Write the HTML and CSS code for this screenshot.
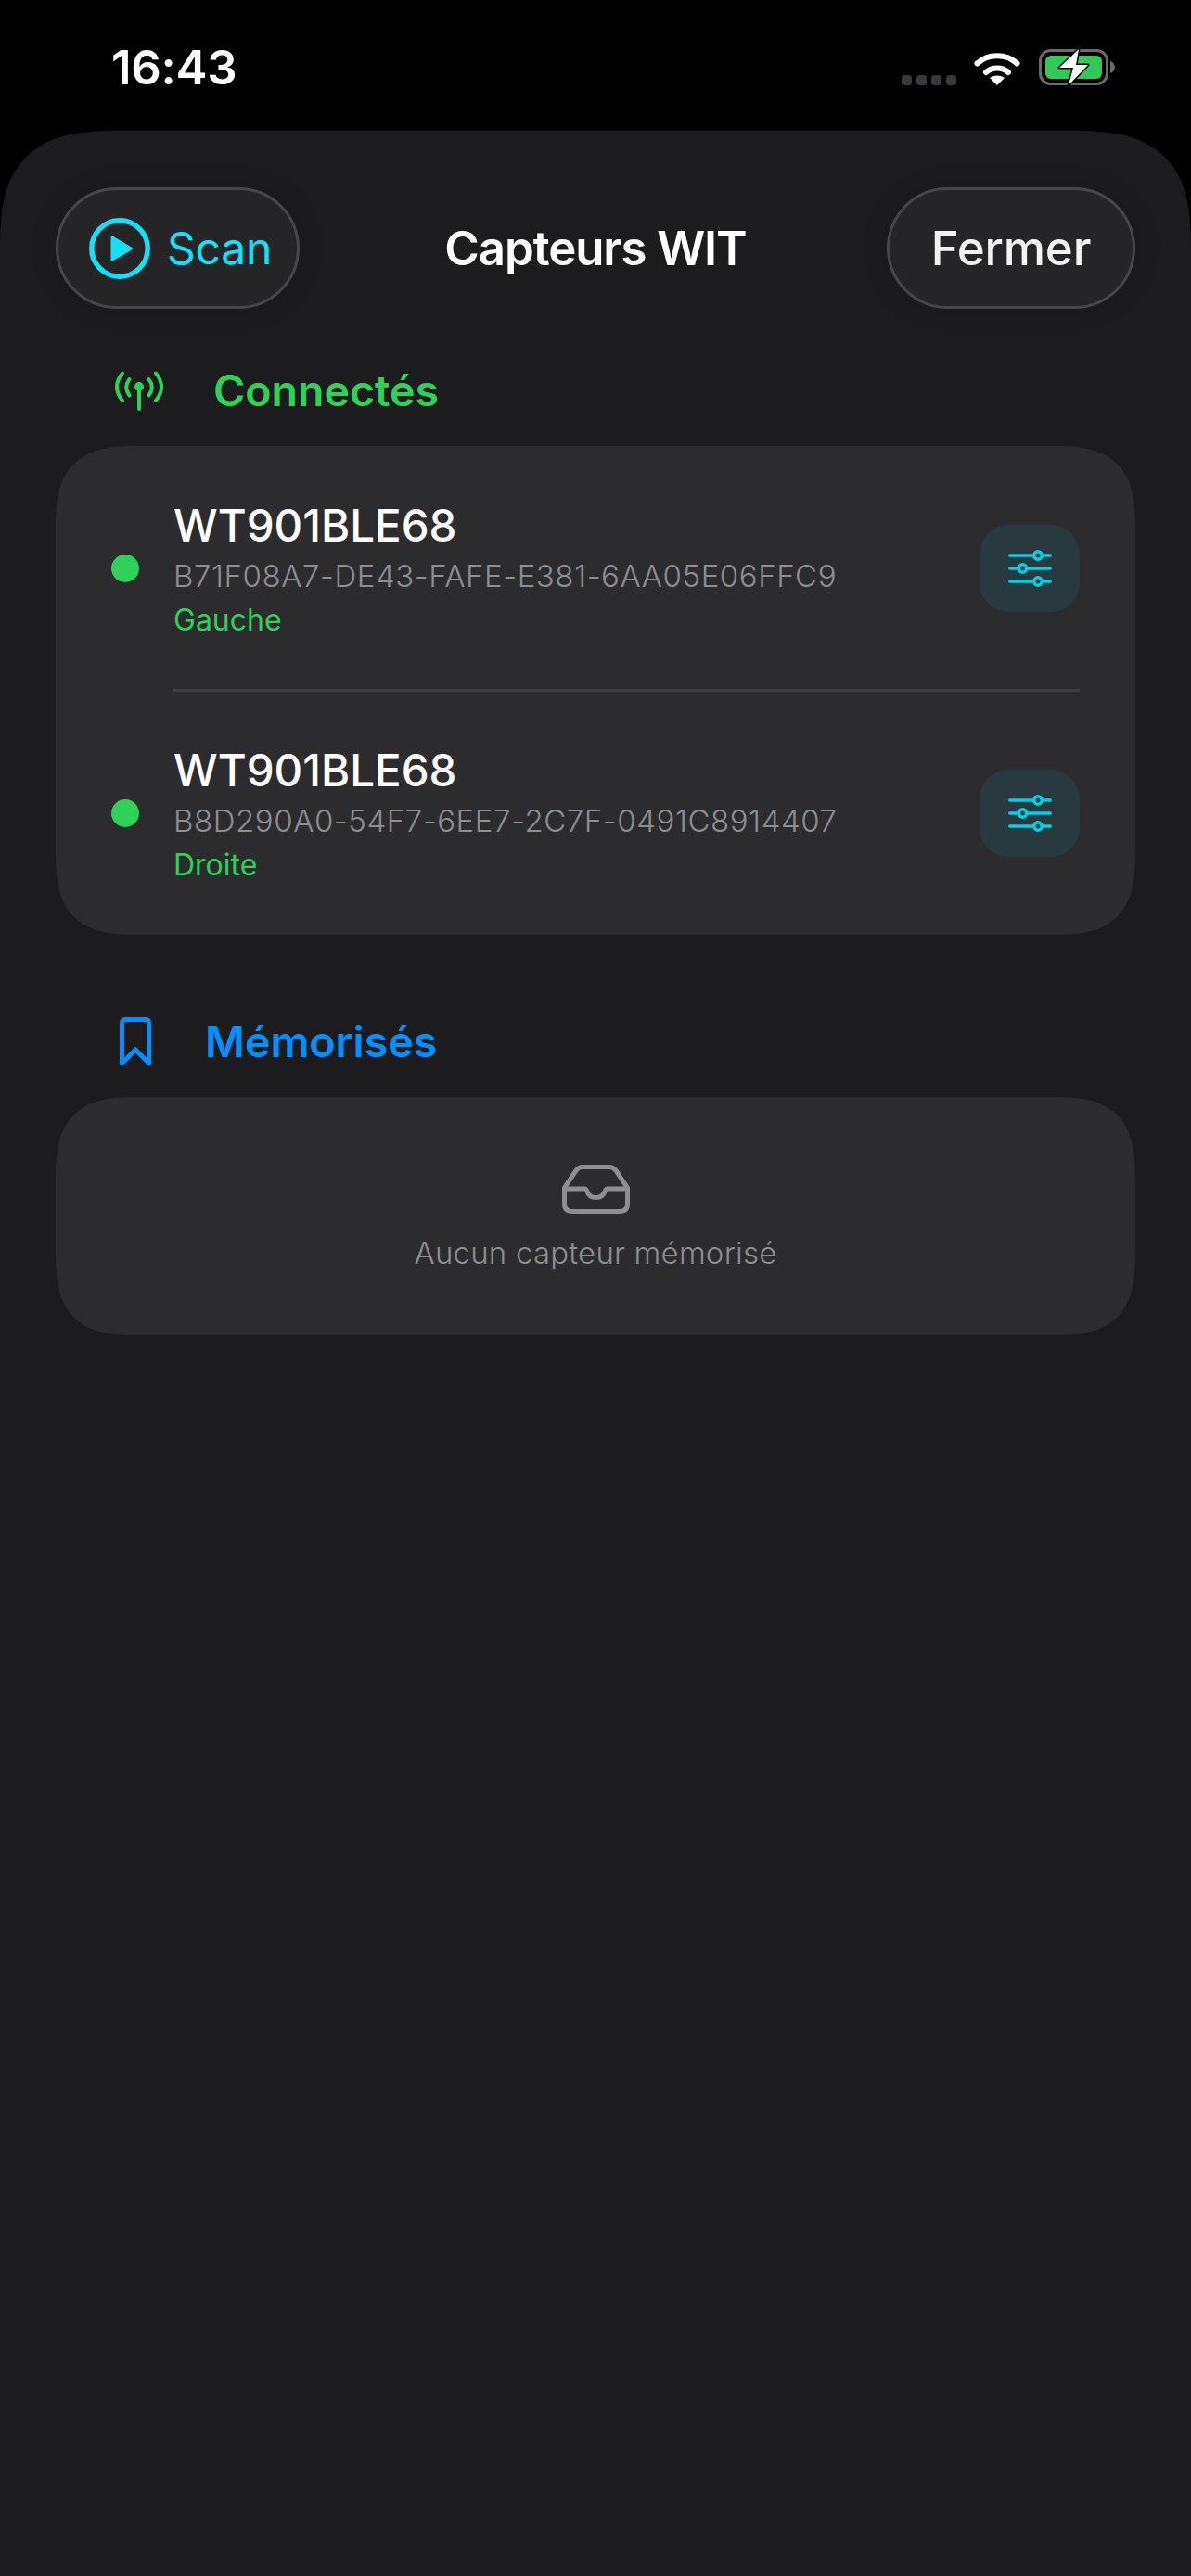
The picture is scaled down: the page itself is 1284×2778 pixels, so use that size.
FILE: index.html
```html
<!DOCTYPE html>
<html lang="fr">
  <head>
    <meta charset="UTF-8" />
    <meta name="viewport" content="width=device-width, initial-scale=1.0" />
    <title>Capteurs WIT</title>
    <link rel="stylesheet" href="styles.css">
  </head>
  <body>
    <div class="status-bar">
      <span class="status-time">16:43</span>
      <div class="status-icons">
        <div class="signal-dots"><i></i><i></i><i></i><i></i></div>
        <svg class="wifi" viewBox="0 0 50 38" width="50" height="38">
          <path d="M3.5 14.5C15 3.5 35 3.5 46.5 14.5" fill="none" stroke="#fff" stroke-width="6" stroke-linecap="round" />
          <path d="M13 24C19.5 18 30.5 18 37 24" fill="none" stroke="#fff" stroke-width="6" stroke-linecap="round" />
          <path d="M25 38L17 30C21.5 26.500 28.500 26.500 33 30Z" fill="#fff" />
        </svg>
        <svg class="battery" viewBox="0 0 82 41" width="82" height="41">
          <rect x="1.500" y="1.500" width="72" height="36" rx="11" fill="none" stroke="#6a6a6c" stroke-width="3" />
          <rect x="7" y="7" width="61" height="25" rx="6" fill="#34c759" />
          <path d="M77 13C80 14 82 16.500 82 19.500C82 22.500 80 25 77 26Z" fill="#6a6a6c" />
          <path d="M43 0L22 20H37L32 39L53 17H40Z" fill="#fff" stroke="#000" stroke-width="3" stroke-linejoin="round" paint-order="stroke" />
        </svg>
      </div>
    </div>

    <main class="sheet">
      <header class="sheet-header">
        <button class="pill pill-scan" type="button">
          <svg viewBox="0 0 66 66" width="66" height="66">
            <circle cx="33" cy="33" r="30.200" fill="none" stroke="#14e0f7" stroke-width="5.500" />
            <path d="M25 21L45.500 33L25 45Z" fill="#14e0f7" stroke="#14e0f7" stroke-width="3" stroke-linejoin="round" />
          </svg>
          <span>Scan</span>
        </button>
        <h1 class="sheet-title">Capteurs WIT</h1>
        <button class="pill pill-close" type="button">Fermer</button>
      </header>

      <h2 class="section-head section-connected">
        <svg viewBox="0 0 52 43" width="52" height="43">
          <g fill="none" stroke="#30d158" stroke-width="4" stroke-linecap="round">
            <path d="M8 2.500Q-4 17 8 32" />
            <path d="M15.500 9Q9 17.500 15.500 26.500" />
            <path d="M36.500 9Q43 17.500 36.500 26.500" />
            <path d="M44 2.500Q56 17 44 32" />
            <path d="M26 18V41" />
          </g>
          <circle cx="26" cy="17" r="5" fill="#30d158" />
        </svg>
        <span>Connectés</span>
      </h2>

      <section class="card">
        <div class="sensor-row">
          <span class="dot"></span>
          <div class="sensor-info">
            <div class="sensor-name">WT901BLE68</div>
            <div class="sensor-id">B71F08A7-DE43-FAFE-E381-6AA05E06FFC9</div>
            <div class="sensor-side">Gauche</div>
          </div>
          <button class="tune-btn" type="button">
            <svg viewBox="0 0 47 40" width="47" height="40">
              <g stroke="#00d3e6" stroke-width="3.400" stroke-linecap="round">
                <path d="M1.700 6H45.300M1.700 20H45.300M1.700 34H45.300" />
                <g fill="#283a40">
                  <circle cx="32" cy="6" r="4.200" />
                  <circle cx="15.500" cy="20" r="4.200" />
                  <circle cx="32" cy="34" r="4.200" />
                </g>
              </g>
            </svg>
          </button>
        </div>
        <div class="divider"></div>
        <div class="sensor-row">
          <span class="dot"></span>
          <div class="sensor-info">
            <div class="sensor-name">WT901BLE68</div>
            <div class="sensor-id">B8D290A0-54F7-6EE7-2C7F-0491C8914407</div>
            <div class="sensor-side">Droite</div>
          </div>
          <button class="tune-btn" type="button">
            <svg viewBox="0 0 47 40" width="47" height="40">
              <g stroke="#00d3e6" stroke-width="3.400" stroke-linecap="round">
                <path d="M1.700 6H45.300M1.700 20H45.300M1.700 34H45.300" />
                <g fill="#283a40">
                  <circle cx="32" cy="6" r="4.200" />
                  <circle cx="15.500" cy="20" r="4.200" />
                  <circle cx="32" cy="34" r="4.200" />
                </g>
              </g>
            </svg>
          </button>
        </div>
      </section>

      <h2 class="section-head section-saved">
        <svg viewBox="0 0 34 52" width="34" height="52">
          <path d="M2.500 6Q2.500 2.500 6 2.500H28Q31.500 2.500 31.500 6V49.500L17 35L2.500 49.500Z" fill="none" stroke="#0091ff" stroke-width="5" stroke-linejoin="round" />
        </svg>
        <span>Mémorisés</span>
      </h2>

      <section class="card card-empty">
        <svg viewBox="0 0 73 53" width="73" height="53">
          <g fill="none" stroke="#8e8e93" stroke-width="5" stroke-linejoin="round" stroke-linecap="round">
            <path d="M2.500 25L14.500 7Q17.500 2.500 22.500 2.500H50.500Q55.500 2.500 58.500 7L70.500 25V42Q70.500 50.500 62 50.500H11Q2.500 50.500 2.500 42Z" />
            <path d="M2.500 26H24Q26 26 27 29Q29 35.500 36.500 35.500Q44 35.500 46 29Q47 26 49 26H70.500" />
          </g>
        </svg>
        <p class="empty-text">Aucun capteur mémorisé</p>
      </section>
    </main>
  </body>
</html>
```

FILE: styles.css
```css
* {
  box-sizing: border-box;
}

body {
  margin: 0;
  background: #000;
  color: #fff;
  font-family: Inter, "Liberation Sans", sans-serif;
}

button {
  font-family: inherit;
  cursor: pointer;
}

.status-bar {
  height: 141px;
  display: flex;
  justify-content: space-between;
  padding: 50px 82px 0 120px;
}

.status-time {
  font-size: 51px;
  font-weight: 600;
  line-height: 46px;
  letter-spacing: -0.3px;
}

.status-icons {
  display: flex;
  align-items: flex-start;
  padding-top: 3px;
}

.signal-dots {
  display: flex;
  gap: 5px;
  margin-top: 28px;
  margin-right: 19px;
}

.signal-dots i {
  width: 11px;
  height: 11px;
  border-radius: 3.500px;
  background: #3a3a3c;
}

.wifi {
  margin-top: 1px;
  margin-right: 20px;
}

.sheet {
  min-height: calc(100vh - 141px);
  background: #1c1c1e;
  border-radius: 130px 130px 0 0;
  corner-shape: superellipse(1.5);
  padding: 61px 60px 0;
}

.sheet-header {
  display: grid;
  grid-template-columns: 1fr auto 1fr;
  align-items: center;
}

.sheet-title {
  margin: 0;
  font-size: 51px;
  font-weight: 600;
  letter-spacing: -1.1px;
}

.pill {
  height: 131px;
  display: flex;
  align-items: center;
  border: 3px solid #47474a;
  border-radius: 66px;
  background: #252527;
  box-shadow: 0 0 30px rgba(0, 0, 0, 0.12);
  font-size: 51px;
}

.pill-scan {
  justify-self: start;
  width: 263px;
  gap: 18px;
  padding: 0 0 0 33px;
  color: #14e0f7;
  font-size: 48px;
  font-weight: 400;
  letter-spacing: -0.2px;
}

.pill-close {
  justify-self: end;
  width: 268px;
  justify-content: center;
  padding: 0;
  color: #f2f2f7;
  font-weight: 500;
  letter-spacing: -0.2px;
}

.section-head {
  display: flex;
  align-items: center;
  height: 56px;
  margin: 60px 0 32px;
  font-size: 46.500px;
  font-weight: 600;
}

.section-connected {
  gap: 54px;
  padding-left: 64px;
  color: #30d158;
}

.section-saved {
  gap: 58px;
  margin-top: 87px;
  padding-left: 69px;
  color: #0091ff;
}

.card {
  background: #2c2c2e;
  border-radius: 90px;
  corner-shape: superellipse(1.5);
}

.sensor-row {
  display: flex;
  align-items: center;
  height: 262px;
  padding: 0 60px;
}

.sensor-row:first-child {
  padding-top: 2px;
}

.dot {
  width: 30px;
  height: 30px;
  border-radius: 50%;
  background: #30d158;
}

.sensor-info {
  flex: 1;
  margin-left: 37px;
  padding-top: 2px;
}

.sensor-name {
  font-size: 47.500px;
  line-height: 60px;
  font-weight: 450;
}

.sensor-id {
  margin-top: 2px;
  font-size: 33px;
  line-height: 44px;
  font-weight: 300;
  letter-spacing: 0.55px;
  color: #8e8e93;
}

.sensor-side {
  margin-top: 4px;
  font-size: 32px;
  line-height: 44px;
  color: #30d158;
}

.tune-btn {
  width: 108px;
  height: 94px;
  display: flex;
  align-items: center;
  justify-content: center;
  padding: 0;
  border: 0;
  border-radius: 32px;
  background: #283a40;
}

.divider {
  height: 3px;
  margin: 0 60px 0 126px;
  background: #3e3e40;
}

.card-empty {
  height: 257px;
  display: flex;
  flex-direction: column;
  align-items: center;
  padding-top: 73px;
}

.empty-text {
  margin: 20px 0 0;
  font-size: 33px;
  line-height: 44px;
  font-weight: 300;
  letter-spacing: 0.2px;
  color: #8e8e93;
}
```
